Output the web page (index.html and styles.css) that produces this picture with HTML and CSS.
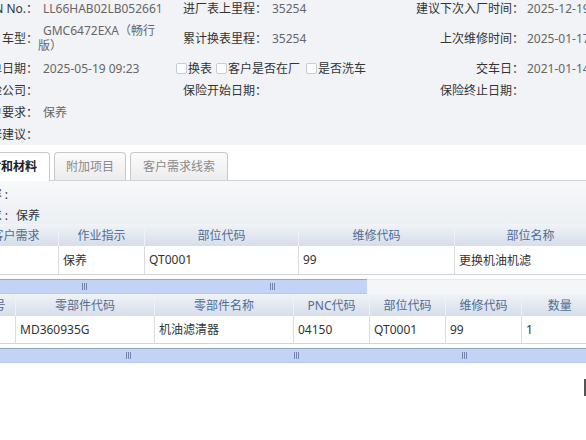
FILE: index.html
```html
<!DOCTYPE html>
<html lang="zh-CN">
<head>
<meta charset="utf-8">
<title>工单详情</title>
<link rel="stylesheet" href="styles.css">
</head>
<body>
<div class="page">
  <section class="form">
    <div class="form-grid">
      <div class="lbl">VIN No.：</div>
      <div class="val">LL66HAB02LB052661</div>
      <div class="lbl2">进厂表上里程：</div>
      <div class="val2">35254</div>
      <div class="lbl">建议下次入厂时间：</div>
      <div class="val3">2025-12-19</div>

      <div class="lbl">车型：</div>
      <div class="val wrap">GMC6472EXA（畅行<br>版）</div>
      <div class="lbl2">累计换表里程：</div>
      <div class="val2">35254</div>
      <div class="lbl">上次维修时间：</div>
      <div class="val3">2025-01-17</div>

      <div class="lbl">开单日期：</div>
      <div class="val">2025-05-19 09:23</div>
      <div class="checks">
        <span class="chk"><span class="box"></span>换表</span>
        <span class="chk"><span class="box"></span>客户是否在厂</span>
        <span class="chk"><span class="box"></span>是否洗车</span>
      </div>
      <div class="lbl">交车日：</div>
      <div class="val3">2021-01-14</div>

      <div class="lbl">保险公司：</div>
      <div class="val"></div>
      <div class="lbl2">保险开始日期：</div>
      <div class="val2"></div>
      <div class="lbl">保险终止日期：</div>
      <div class="val3"></div>

      <div class="lbl">客户要求：</div>
      <div class="val">保养</div>
      <div class="lbl2"></div>
      <div class="val2"></div>
      <div class="lbl"></div>
      <div class="val3"></div>

      <div class="lbl">维修建议：</div>
      <div class="val"></div>
      <div class="lbl2"></div>
      <div class="val2"></div>
      <div class="lbl"></div>
      <div class="val3"></div>
    </div>
  </section>

  <nav class="tabs">
    <div class="tab active t1">工时和材料</div>
    <div class="tab t2">附加项目</div>
    <div class="tab t3">客户需求线索</div>
  </nav>

  <section class="panel">
    <div class="prow"><span class="plbl">工作内容 :</span><span class="pval"></span></div>
    <div class="prow"><span class="plbl">客户需求 :</span><span class="pval">保养</span></div>
  </section>

  <div class="grid g1">
    <table>
      <colgroup><col class="w86"><col class="w86"><col class="w154"><col class="w156"><col class="w152"><col class="w120"></colgroup>
      <thead><tr><th>客户需求</th><th>作业指示</th><th>部位代码</th><th>维修代码</th><th>部位名称</th><th>备注</th></tr></thead>
      <tbody><tr><td></td><td>保养</td><td>QT0001</td><td>99</td><td>更换机油机滤</td><td></td></tr></tbody>
    </table>
  </div>
  <div class="hscroll s1">
    <div class="thumb t-short"><span class="grip g85"></span><span class="grip g273"></span></div>
    <div class="track"></div>
  </div>

  <div class="grid g2">
    <table>
      <colgroup><col class="w44"><col class="w139"><col class="w139"><col class="w76"><col class="w76"><col class="w76"><col class="w76"></colgroup>
      <thead><tr><th>序号</th><th>零部件代码</th><th>零部件名称</th><th>PNC代码</th><th>部位代码</th><th>维修代码</th><th>数量</th></tr></thead>
      <tbody><tr><td></td><td>MD360935G</td><td>机油滤清器</td><td>04150</td><td>QT0001</td><td>99</td><td>1</td></tr></tbody>
    </table>
  </div>
  <div class="hscroll s2">
    <div class="thumb t-full"><span class="grip g129"></span><span class="grip g297"></span><span class="grip g465"></span></div>
  </div>

  <div class="edge-mark"></div>
</div>
</body>
</html>
```

FILE: styles.css
```css
html, body {
  margin: 0;
  padding: 0;
  background: #ffffff;
}
body {
  width: 586px;
  height: 440px;
  overflow: hidden;
  font-family: "Noto Sans", "Noto Sans CJK SC", sans-serif;
  font-size: 12px;
  color: #333;
}
.page {
  position: relative;
  width: 586px;
  height: 440px;
  overflow: hidden;
}

/* ---------- top form ---------- */
.form {
  height: 145px;
  background: #f2f3f7;
  overflow: hidden;
}
.form-grid {
  display: grid;
  grid-template-columns: 81px 145px 87px 130px 124px 120px;
  grid-template-rows: 22px 38px 22px 22px 22px 22px;
  margin-left: -43px;
  margin-top: -3px;
  align-items: center;
  width: 687px;
}
.lbl {
  text-align: right;
  white-space: nowrap;
  color: #333;
}
.lbl2 {
  white-space: nowrap;
  color: #333;
}
.val {
  color: #666;
  text-indent: 5px;
  white-space: nowrap;
}
.val.wrap {
  line-height: 15px;
}
.val2 {
  color: #666;
  padding-left: 2px;
  white-space: nowrap;
}
.val3 {
  color: #666;
  padding-left: 3px;
  white-space: nowrap;
}
.checks {
  grid-column: 3 / span 2;
  display: flex;
  align-items: center;
  margin-left: -7px;
  white-space: nowrap;
  color: #333;
}
.chk {
  display: inline-flex;
  align-items: center;
  margin-right: 4px;
}
.chk:nth-child(2) { margin-right: 6px; }
.box {
  display: inline-block;
  width: 11px;
  height: 11px;
  box-sizing: border-box;
  border: 1px solid #c9ccd2;
  border-radius: 2px;
  background: #fafbfc;
  margin-right: 1px;
}

/* ---------- tabs ---------- */
.tabs {
  display: flex;
  align-items: flex-end;
  height: 35px;
  gap: 4px;
  margin-left: -36px;
  position: relative;
  z-index: 1;
}
.tab {
  box-sizing: border-box;
  height: 28px;
  line-height: 28px;
  text-align: center;
  border: 1px solid #c8c8c8;
  border-bottom: none;
  border-radius: 4px 4px 0 0;
  background: linear-gradient(#fbfbfb, #ececec);
  color: #8a8a8a;
  white-space: nowrap;
}
.tab.active {
  background: #ffffff;
  color: #222;
  font-weight: bold;
  height: 29px;
  margin-bottom: -1px;
}
.t1 { width: 86px; }
.t2 { width: 72px; }
.t3 { width: 98px; }

/* ---------- panel ---------- */
.panel {
  box-sizing: border-box;
  height: 44px;
  border-top: 1px solid #d2d4d8;
  background: linear-gradient(#f7f8fa, #eceff3);
  padding-top: 2px;
}
.prow {
  display: flex;
  height: 21px;
  align-items: center;
  white-space: nowrap;
}
.plbl {
  width: 56px;
  margin-left: -48px;
  text-align: right;
  color: #333;
}
.pval {
  margin-left: 8px;
  color: #333;
}

/* ---------- grids ---------- */
.grid {
  overflow: hidden;
  width: 586px;
}
.grid table {
  border-collapse: collapse;
  table-layout: fixed;
}
.g1 table { margin-left: -28px; width: 754px; }
.g2 table { margin-left: -29px; width: 626px; }
.w44 { width: 44px; }
.w76 { width: 76px; }
.w86 { width: 86px; }
.w120 { width: 120px; }
.w139 { width: 139px; }
.w152 { width: 152px; }
.w154 { width: 154px; }
.w156 { width: 156px; }
th {
  height: 22px;
  padding: 0;
  font-weight: normal;
  color: #4f6c95;
  text-align: center;
  background: linear-gradient(#f0f3f7, #d6dde9);
  border-left: 1px solid #eef1f6;
  white-space: nowrap;
  overflow: hidden;
}
td {
  height: 28px;
  box-sizing: border-box;
  padding: 0 0 0 4px;
  background: #ffffff;
  color: #333;
  border-left: 1px solid #d9dbe0;
  border-bottom: 1px solid #d0d3d8;
  white-space: nowrap;
  overflow: hidden;
}

/* ---------- scrollbars ---------- */
.hscroll {
  display: flex;
  height: 15px;
  box-sizing: border-box;
}
.s1 { margin-top: 4px; }
.s2 { margin-top: 4px; }
.thumb {
  position: relative;
  box-sizing: border-box;
  height: 15px;
  border-top: 1px solid #9aa8bd;
  border-bottom: 1px solid #b9c7e4;
  background: #c3d3f6;
}
.t-short { width: 367px; }
.t-full { width: 586px; }
.track {
  flex: 1;
  background: #f5f6f7;
  border-top: 1px solid #e8eaee;
}
.grip {
  position: absolute;
  top: 3px;
  width: 6px;
  height: 7px;
  background: repeating-linear-gradient(90deg, #7284ad 0 1px, transparent 1px 2px);
}
.g85 { left: 82px; }
.g273 { left: 270px; }
.g129 { left: 126px; }
.g297 { left: 294px; }
.g465 { left: 462px; }

.edge-mark {
  position: absolute;
  left: 584px;
  top: 379px;
  width: 2px;
  height: 17px;
  background: #555;
}
```
